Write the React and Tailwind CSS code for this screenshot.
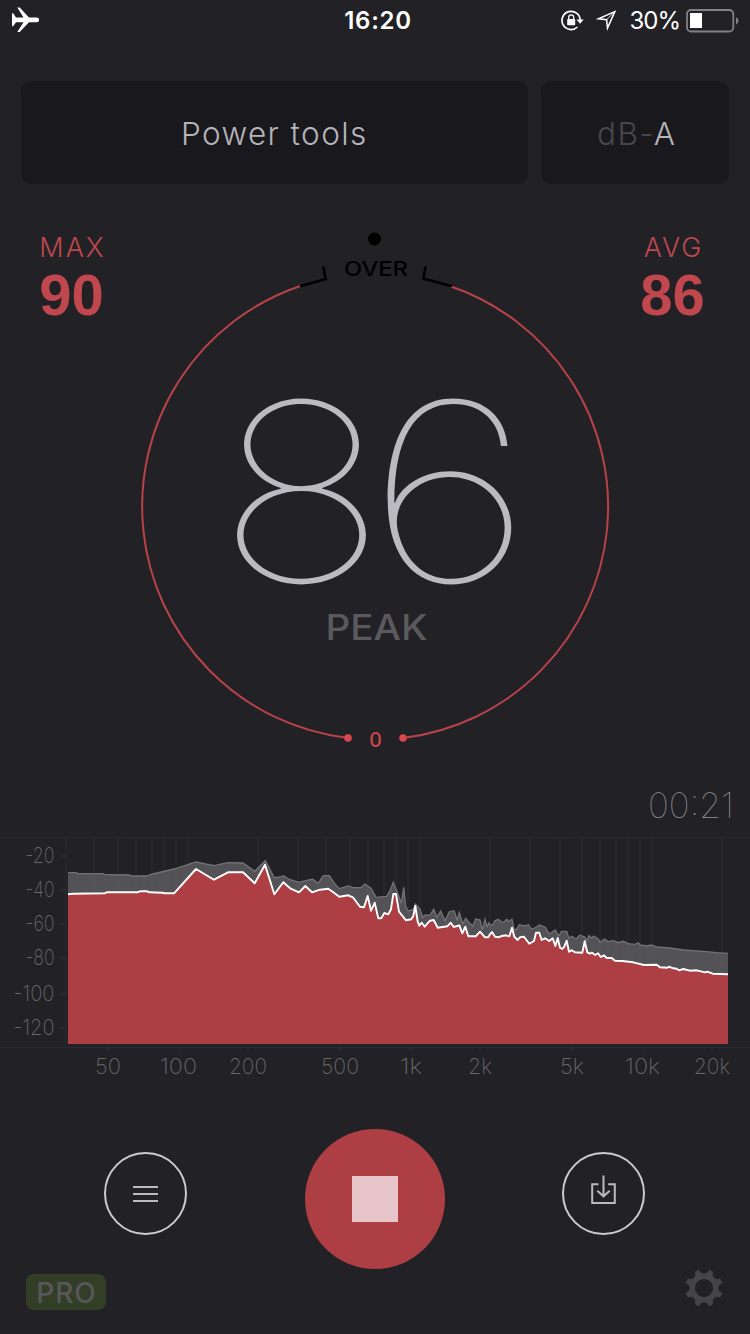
import React from "react";

// Spectrum samples, three frequency bands, each with its own x offset.
// Units are thirds of a pixel, y grows downwards from the top of the chart.
const LEVEL = [
  {
    offset: 0,
    points: "204,193 220,191 315,190 320,187 412,187 420,184 442,184 448,187 488,188 492,190 522,190 588,117 642,149 684,127 729,127 764,160",
  },
  {
    offset: 720,
    points:
      "75,104 103,193 130,157 152,176 177,187 196,168 216,187 240,179 265,176 280,187 298,200 325,196 340,203 360,230 372,232 383,198 393,242 404,218 415,265 424,265 433,249 445,253 453,238 460,192 468,192 477,245 498,271 514,268 520,258 526,228 533,275 538,287 545,278 554,290 570,272 581,270 593,293 622,289 632,278 641,291 658,286 667,310 676,290 685,319 707,319 720,305 735,322 745,322",
  },
  {
    offset: 1470,
    points:
      "0,313 6,306 15,320 25,322 35,318 48,316 58,319 66,293 73,320 83,330 90,322 102,320 118,341 132,333 138,308 148,308 155,330 165,325 178,333 188,325 196,348 203,324 210,353 217,357 223,350 230,332 237,365 245,361 255,367 277,368 284,334 292,367 300,371 306,368 316,375 324,370 332,381 342,376 350,384 365,384 375,392 397,393 430,397 462,405 500,404 510,412 532,413 537,410 550,415 560,416 567,421 580,417 600,422 620,421 645,427 652,425 668,431 714,433",
  },
];

const PEAK = [
  {
    offset: 0,
    points: "204,128 230,128 233,131 310,131 315,134 390,135 395,138 440,138 458,132 522,117 588,96 642,107 684,98 729,99 764,124",
  },
  {
    offset: 720,
    points:
      "76,92 103,143 120,141 130,137 150,149 177,157 200,151 218,148 235,160 250,137 268,137 285,163 298,176 325,168 340,173 362,173 375,162 393,175 408,202 440,199 450,182 460,157 475,195 484,220 491,172 497,230 505,243 520,238 526,222 540,238 548,262 557,254 570,256 581,238 591,262 602,243 615,272 628,245 642,242 652,270 658,248 668,282 677,265 685,275 698,288 707,267 720,270 727,300 735,268 741,290 747,278",
  },
  {
    offset: 1470,
    points:
      "0,285 8,285 15,272 25,268 35,277 42,276 50,268 55,275 66,268 72,298 80,298 88,284 105,288 115,284 125,298 140,291 148,285 165,291 178,312 196,300 206,318 215,304 230,304 237,325 245,319 258,327 270,315 285,322 290,332 297,317 305,325 311,318 325,327 330,337 344,327 355,335 370,332 385,338 400,334 415,341 435,343 445,338 450,345 470,348 485,345 500,351 540,354 580,360 640,364 680,368 714,370",
  },
];

const GRID_X = [
  66, 94, 118, 136, 152, 164, 176, 188, 258, 298, 326, 350, 368, 384, 396, 408, 420,
  490, 530, 560, 582, 600, 616, 628, 640, 652, 722,
];

const Y_LABELS = [
  { text: "-20", y: 25, w: 29 },
  { text: "-40", y: 59, w: 29 },
  { text: "-60", y: 93, w: 29 },
  { text: "-80", y: 127, w: 29 },
  { text: "-100", y: 163, w: 41 },
  { text: "-120", y: 197, w: 41 },
];

const X_LABELS = [
  { text: "50", x: 108, w: 26 },
  { text: "100", x: 178.5, w: 37 },
  { text: "200", x: 248, w: 38 },
  { text: "500", x: 340, w: 38 },
  { text: "1k", x: 411, w: 22 },
  { text: "2k", x: 480, w: 24 },
  { text: "5k", x: 572, w: 24 },
  { text: "10k", x: 642.5, w: 35 },
  { text: "20k", x: 712, w: 36 },
];

const toPoints = (bands) =>
  bands
    .flatMap(({ offset, points }) =>
      points.split(" ").map((p) => {
        const [x, y] = p.split(",").map(Number);
        return `${((x + offset) / 3).toFixed(1)},${(y / 3).toFixed(1)}`;
      })
    )
    .join(" ");

// ---------------------------
// Status bar
// ---------------------------
function StatusBar() {
  return (
    <header className="grid h-10 grid-cols-3 items-center pl-3 pr-[10px] text-2xl text-white">
      <svg width="28" height="26" viewBox="0 0 28 26" fill="currentColor">
        <path d="M0 6.3h1.2L4 10.5h7.5L5.3.5h2.4L17 10.5h7.7a2.4 2.4 0 0 1 0 4.8H17L7.7 25H5.3l6.2-9.7H4L1.2 19.2H0z" />
      </svg>
      <span className="text-center font-semibold tracking-[0.7px] pt-px pl-1">16:20</span>
      <div className="flex items-center justify-end pt-px">
        <svg width="23" height="21" viewBox="0 0 23 21" className="mr-3 shrink-0" fill="none">
          <path d="M19.2 10.3A9.1 9.1 0 1 0 16.4 17" stroke="white" strokeWidth="1.7" />
          <path d="M15.5 9.6h7.2l-3.6 4.2z" fill="white" />
          <rect x="6.2" y="9" width="8" height="6.2" rx=".8" fill="white" />
          <path d="M7.7 9V7.4a2.5 2.5 0 0 1 5 0V9" stroke="white" strokeWidth="1.3" />
        </svg>
        <svg width="21" height="21" viewBox="0 0 21 21" className="mr-3 shrink-0" fill="none">
          <path d="M18.8 1.6 2.4 8.8l8.2.9.9 8.4z" stroke="white" strokeWidth="1.5" />
          <path d="m18.8 1.6-8.2 8.1" stroke="white" strokeWidth=".8" />
        </svg>
        <span className="mr-[6px] tracking-[-1px]">30%</span>
        <svg width="54" height="24" viewBox="0 0 54 24" className="shrink-0" fill="none">
          <rect x="1" y="1" width="46.3" height="21.5" rx="4" stroke="#828186" strokeWidth="1.8" />
          <rect x="4" y="4" width="12" height="15" fill="white" />
          <path d="M50 8.2q2.6 1.2 2.6 3.6T50 15.4z" fill="#828186" />
        </svg>
      </div>
    </header>
  );
}

// ---------------------------
// Max / avg readings
// ---------------------------
function Reading({ label, value }) {
  return (
    <div className="flex w-[67px] flex-col items-center text-[#bf474d]">
      <span className="pl-[2px] text-[27px] font-light leading-[27px] tracking-[2px]">{label}</span>
      <span className="mt-[7px] font-['Liberation_Sans',sans-serif] text-[58px] font-bold leading-[54px]">
        {value}
      </span>
    </div>
  );
}

// ---------------------------
// Gauge
// ---------------------------
function Gauge() {
  return (
    <svg width="480" height="530" viewBox="135 225 480 530" fill="none" className="shrink-0">
      <circle cx="374.5" cy="239" r="6.5" fill="black" />
      <path d="M301 285.7A233 233 0 0 0 348 738" stroke="#b74349" strokeWidth="2" />
      <path d="M449 285.7A233 233 0 0 1 403 738" stroke="#b74349" strokeWidth="2" />
      <path d="M300 286.2 325.6 279 323.3 266.5M452 286.2 423.3 278.6 425.6 266.2" stroke="black" strokeWidth="2.6" />
      <circle cx="348" cy="738" r="3.8" fill="#db474e" />
      <circle cx="403" cy="738" r="3.8" fill="#db474e" />
      <text x="344" y="275.6" fontSize="20" fontWeight="500" fill="black" textLength="64" lengthAdjust="spacingAndGlyphs">
        OVER
      </text>
      <text x="369.3" y="747" fontSize="19.5" fontWeight="500" fill="#d0464d">
        0
      </text>
      <g fontSize="249" fontWeight="100" fill="#bbbac0">
        <text x="216.5" y="582" textLength="170" lengthAdjust="spacingAndGlyphs">8</text>
        <text x="366.5" y="582" textLength="166" lengthAdjust="spacingAndGlyphs">6</text>
      </g>
      <text x="325.5" y="640" fontSize="35" fontWeight="500" fill="#5a595e" textLength="102" lengthAdjust="spacingAndGlyphs">
        PEAK
      </text>
    </svg>
  );
}

// ---------------------------
// Spectrum chart
// ---------------------------
function Spectrum() {
  const level = toPoints(LEVEL);
  const peak = toPoints(PEAK);

  return (
    <svg width="750" height="250" viewBox="0 0 750 250" fill="none" className="block">
      <polygon points={`${peak} 728,214 68,214`} fill="#535257" />
      <polyline points={peak} stroke="#737277" strokeWidth="1.3" />
      {GRID_X.map((x) => (
        <path key={x} d={`M${x} 8V215`} stroke="#7a797e" strokeOpacity=".06" strokeWidth="2" />
      ))}
      <polygon points={`${level} 728,214 68,214`} fill="#ad3e44" />
      <polyline points={level} stroke="white" strokeWidth="1.9" strokeLinejoin="round" />
      <path d="M0 7.5H750M0 217.5H750" stroke="#2b2a2f" />
      <g fontSize="22" fontWeight="200" fill="#68676c">
        {Y_LABELS.map(({ text, y, w }) => (
          <g key={text}>
            <path d={`M60 ${y + 1}H66`} stroke="#2b2a2f" strokeWidth="2" />
            <text x={54.5 - w} y={y + 8} textLength={w} lengthAdjust="spacingAndGlyphs">{text}</text>
          </g>
        ))}
        {X_LABELS.map(({ text, x, w }) => (
          <g key={text}>
            <path d={`M${x} 216V221`} stroke="#2b2a2f" strokeWidth="2" />
            <text x={x - w / 2} y="244" textLength={w} lengthAdjust="spacingAndGlyphs">{text}</text>
          </g>
        ))}
      </g>
    </svg>
  );
}

function RoundButton({ label, children }) {
  return (
    <button
      aria-label={label}
      className="flex size-[83px] items-center justify-center rounded-full border-2 border-[#cbcacd] text-[#bbbac0]"
    >
      {children}
    </button>
  );
}

function GearIcon() {
  const notches = [0, 45, 90, 135, 180, 225, 270, 315];
  return (
    <svg width="38" height="38" viewBox="-19 -19 38 38">
      <mask id="gear">
        <circle r="18.9" fill="white" />
        <circle r="9.1" fill="black" />
        {notches.map((a) => (
          <circle key={a} cy="-19.3" r="4.9" fill="black" transform={`rotate(${a})`} />
        ))}
      </mask>
      <circle r="19" fill="#454449" mask="url(#gear)" />
    </svg>
  );
}

export default function App() {
  return (
    <div className="flex h-[1334px] w-[750px] flex-col overflow-hidden bg-[#222126] font-[Inter,sans-serif]">
      <StatusBar />

      {/* Mode and weighting */}
      <div className="mt-[41px] flex h-[103px] gap-[13px] px-[21px] text-[31.5px] font-light text-[#b5b4b9]">
        <button className="w-[506.5px] rounded-[10px] bg-[#19181d] pt-[2px] tracking-[1.4px]">Power tools</button>
        <button className="flex-1 rounded-[10px] bg-[#19181d] pt-[2px] pl-1 tracking-[1.4px]">
          <span className="text-[#48474c]">dB-</span>A
        </button>
      </div>

      {/* Readings */}
      <main className="mt-[41px] flex h-[530px] justify-between px-[38px]">
        <div className="w-[97px] pt-[9px]">
          <Reading label="MAX" value="90" />
        </div>
        <Gauge />
        <div className="flex w-[97px] justify-end pt-[9px] pr-[6px]">
          <Reading label="AVG" value="86" />
        </div>
      </main>

      <div className="flex h-[75px] items-end justify-end pr-[13px]">
        <svg width="92" height="54" viewBox="0 0 92 54">
          <text x="3" y="42" fontSize="35" fontWeight="100" fill="#929196" textLength="86" lengthAdjust="spacingAndGlyphs">
            00:21
          </text>
        </svg>
      </div>

      <Spectrum />

      {/* Controls */}
      <div className="mt-[49px] flex h-[140px] items-start justify-between pl-[104px] pr-[105px]">
        <div className="pt-[23px]">
          <RoundButton label="Menu">
            <svg width="25" height="17" viewBox="0 0 25 17" stroke="currentColor" strokeWidth="2">
              <path d="M0 2h25M0 9h25M0 16h25" />
            </svg>
          </RoundButton>
        </div>
        <button aria-label="Stop" className="flex size-[140px] items-center justify-center rounded-full bg-[#ad3e44]">
          <span className="size-[46px] bg-[#e8c5c9]" />
        </button>
        <div className="pt-[23px]">
          <RoundButton label="Save">
            <svg width="25" height="30" viewBox="0 0 25 30" fill="none" stroke="currentColor" strokeWidth="2" className="mb-2">
              <path d="M7.5 9.2H1.2V28H23.8V9.2H17.2M12.5 .5v20.5M6.3 15.8l6.2 5.5 6.2-5.5" />
            </svg>
          </RoundButton>
        </div>
      </div>

      <footer className="flex items-start justify-between pl-[26px] pr-[27px]">
        <span className="mt-[5px] flex h-9 w-20 items-center justify-center rounded-lg bg-[#323f26] pt-px pl-px text-[28px] font-medium tracking-[1px] text-[#57565b]">
          PRO
        </span>
        <GearIcon />
      </footer>
    </div>
  );
}
